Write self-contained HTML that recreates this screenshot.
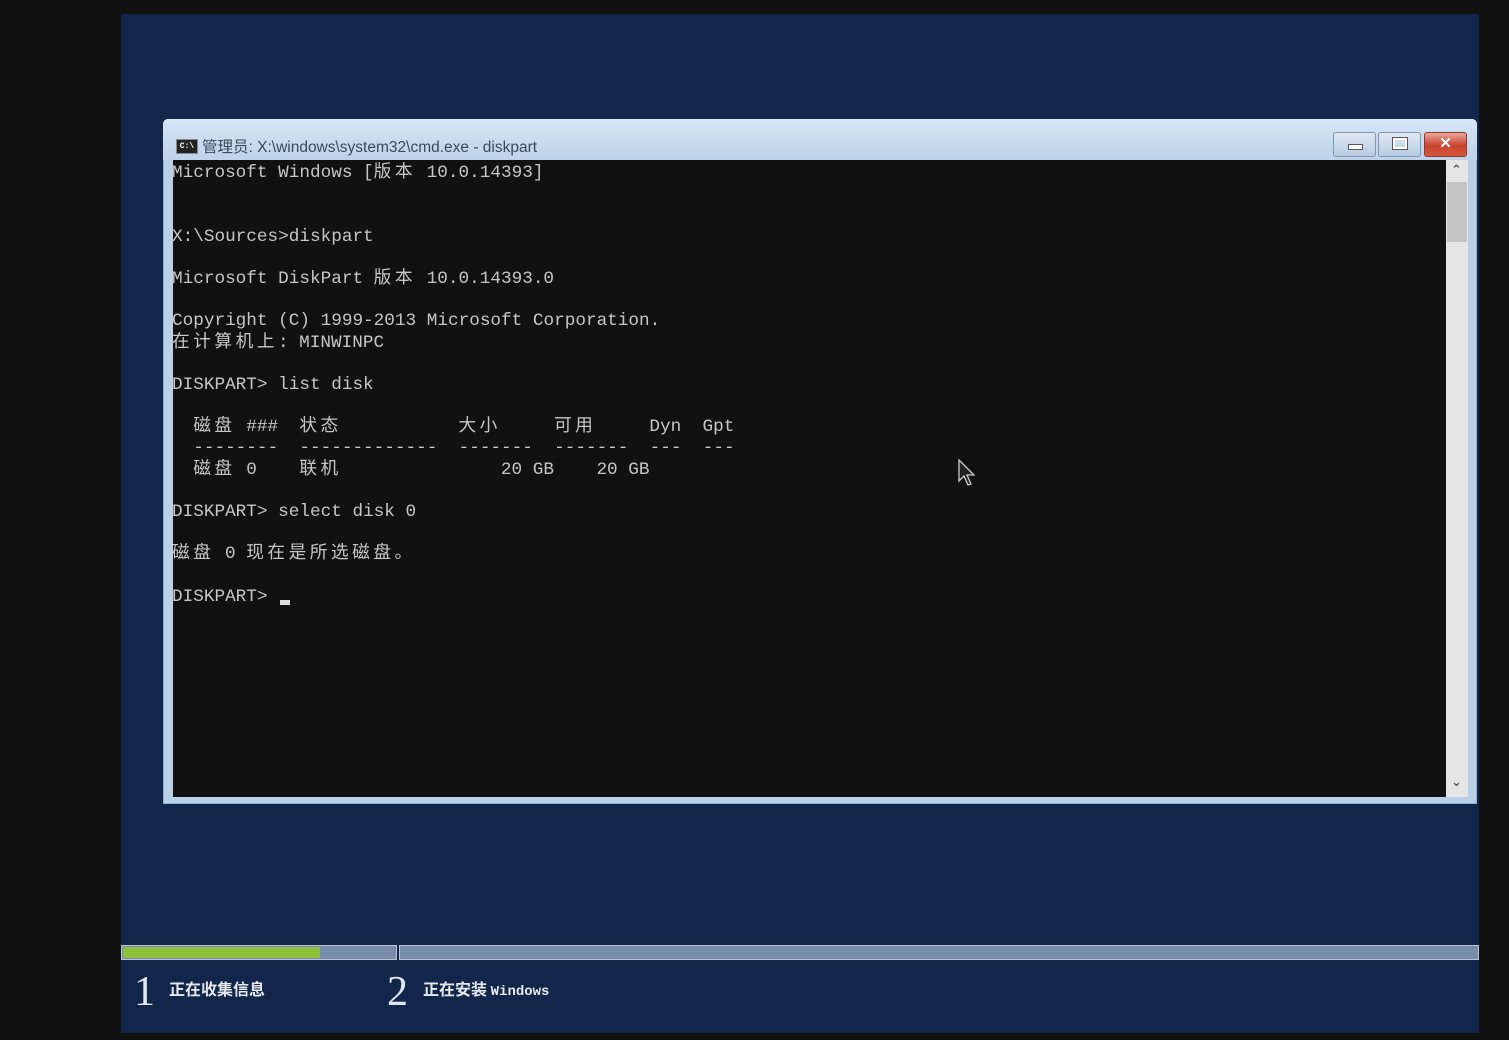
<!DOCTYPE html>
<html><head><meta charset="utf-8"><style>
html,body{margin:0;padding:0;}
body{width:1509px;height:1040px;background:#111111;position:relative;overflow:hidden;font-family:"Liberation Sans","Noto Sans CJK SC",sans-serif;}
.panel{position:absolute;left:121px;top:14px;width:1358px;height:1019px;background:#12254a;}
.frame{position:absolute;left:163px;top:119px;width:1314px;height:685px;background:#b8d0e8;border-radius:5px 5px 0 0;box-shadow:inset 0 0 0 1px #8fb0d0;}
.titlebar{position:absolute;left:163px;top:119px;width:1314px;height:41px;border-radius:5px 5px 0 0;background:linear-gradient(#d6e6f5,#bcd3ea);}
.title{position:absolute;left:202px;top:135px;font-size:15.5px;color:#3a4a5c;white-space:nowrap;}
.icon{position:absolute;left:176px;top:139px;width:20px;height:13px;background:#222;border:1px solid #888;color:#fff;font:bold 8px "Liberation Mono",monospace;line-height:13px;text-align:center;}
.btn{position:absolute;top:132px;height:23px;border-radius:3px;border:1px solid #7f95b0;background:linear-gradient(#dfe9f4,#b7cbe2);}
.console{position:absolute;left:173px;top:160px;width:1273px;height:637px;background:#111111;}
.sb{position:absolute;left:1446px;top:160px;width:22px;height:637px;background:#e6e6e6;}
.thumb{position:absolute;left:1447px;top:182px;width:20px;height:60px;background:#c4c4c4;}
.ln{position:absolute;left:172px;font-family:"Liberation Mono",monospace;font-size:17.7px;color:#c6c6c6;white-space:pre;line-height:21.2px;height:21.2px;}
.a{margin-top:3px;}
.c{font-family:"Noto Sans CJK SC",sans-serif;letter-spacing:3.5px;font-size:17.7px;}
.prog{position:absolute;top:945px;height:15px;background:#7b8cab;border:1px solid #b9c3d4;box-sizing:border-box;}
.num{position:absolute;top:968px;font-family:"Liberation Serif",serif;font-size:42px;color:#dfe6ef;}
.step{position:absolute;top:976px;font-size:16px;color:#e6e9ee;font-weight:bold;font-family:"Noto Sans CJK SC",sans-serif;}
</style></head><body>
<div class="panel"></div>
<div class="frame"></div>
<div class="titlebar"></div>
<div class="icon">C:\</div>
<div class="title">管理员: X:\windows\system32\cmd.exe - diskpart</div>
<div class="btn" style="left:1333px;width:41px;"><div style="position:absolute;left:14px;top:11px;width:13px;height:4px;background:#fff;border:1px solid #556;"></div></div>
<div class="btn" style="left:1378px;width:41px;"><div style="position:absolute;left:14px;top:5px;width:10px;height:7px;border:2px solid #fff;outline:1px solid #556;"></div></div>
<div class="btn" style="left:1424px;width:41px;border-color:#8a3a30;background:linear-gradient(#e9a89a,#c9432e 55%,#d65a3e);color:#fff;font:bold 15px 'Liberation Sans',sans-serif;text-align:center;line-height:22px;">✕</div>
<div class="console"></div>
<div class="sb"></div>
<div class="thumb"></div>
<div style="position:absolute;left:1451px;top:163px;color:#555;font:bold 13px 'DejaVu Sans',sans-serif;">⌃</div>
<div style="position:absolute;left:1451px;top:775px;color:#555;font:bold 13px 'DejaVu Sans',sans-serif;">⌄</div>

<div class="ln" style="top:160px">Microsoft Windows [<span class="c">版本</span> 10.0.14393]</div>
<div class="ln a" style="top:224px">X:\Sources&gt;diskpart</div>
<div class="ln" style="top:266px">Microsoft DiskPart <span class="c">版本</span> 10.0.14393.0</div>
<div class="ln a" style="top:308px">Copyright (C) 1999-2013 Microsoft Corporation.</div>
<div class="ln" style="top:330px"><span class="c">在计算机上</span>: MINWINPC</div>
<div class="ln a" style="top:372px">DISKPART&gt; list disk</div>
<div class="ln" style="top:414px">  <span class="c">磁盘</span> ###  <span class="c">状态</span>           <span class="c">大小</span>     <span class="c">可用</span>     Dyn  Gpt</div>
<div class="ln a" style="top:435px">  --------  -------------  -------  -------  ---  ---</div>
<div class="ln" style="top:457px">  <span class="c">磁盘</span> 0    <span class="c">联机</span>               20 GB    20 GB</div>
<div class="ln a" style="top:499px">DISKPART&gt; select disk 0</div>
<div class="ln" style="top:541px"><span class="c">磁盘</span> 0 <span class="c">现在是所选磁盘。</span></div>
<div class="ln a" style="top:584px">DISKPART&gt; </div>
<div style="position:absolute;left:280px;top:600px;width:10px;height:5px;background:#ddd;"></div>

<svg style="position:absolute;left:957px;top:459px" width="20" height="30" viewBox="0 0 20 30"><path d="M2 1 L2 22 L7 17 L11 26 L14 25 L10 16 L17 16 Z" fill="#222" stroke="#ccc" stroke-width="1.3"/></svg>

<div class="prog" style="left:121px;width:276px;"><div style="position:absolute;left:1px;top:1px;width:197px;height:11px;background:#8fc03a;"></div></div>
<div class="prog" style="left:399px;width:1080px;"></div>
<div class="num" style="left:134px;">1</div>
<div class="step" style="left:169px;">正在收集信息</div>
<div class="num" style="left:387px;">2</div>
<div class="step" style="left:423px;">正在安装 <span style="font-family:'Liberation Mono',monospace;font-size:14px;">Windows</span></div>
</body></html>
